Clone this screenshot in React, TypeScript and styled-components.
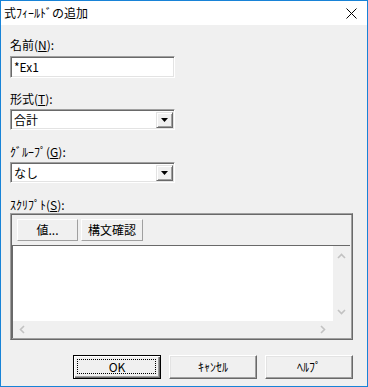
import React from "react";
import styled, { createGlobalStyle } from "styled-components";

const GlobalStyle = createGlobalStyle`
  html, body {
    margin: 0;
    padding: 0;
    background: #f0f0f0;
  }
  * {
    box-sizing: border-box;
  }
`;

const Window = styled.div`
  width: 368px;
  height: 387px;
  border: 1px solid #1883d7;
  display: flex;
  flex-direction: column;
  font-family: "Noto Sans CJK JP", "Liberation Sans", sans-serif;
  font-size: 12px;
  color: #000;
  background: #f0f0f0;
`;

const TitleBar = styled.div`
  height: 24px;
  background: #fff;
  display: flex;
  align-items: center;
  justify-content: space-between;
  padding: 0 10px 0 3px;
  flex-shrink: 0;
`;

const Title = styled.span`
  line-height: 14px;
`;

const Body = styled.div`
  flex: 1;
  display: flex;
  flex-direction: column;
  padding: 13px 14px 7px 9px;
`;

const Label = styled.div<{ $gap: number; $top?: number }>`
  height: 14px;
  line-height: 14px;
  margin-top: ${(p) => p.$top ?? 0}px;
  margin-bottom: ${(p) => p.$gap}px;
`;

const Key = styled.span`
  text-decoration: underline;
`;

const Sunken = styled.div<{ $height: number }>`
  width: 165px;
  height: ${(p) => p.$height}px;
  background: #fff;
  border-style: solid;
  border-width: 1px;
  border-color: #a0a0a0 #fff #fff #a0a0a0;
  box-shadow: inset 1px 1px 0 #696969, inset -1px -1px 0 #e3e3e3;
  display: flex;
  align-items: center;
  padding: 0 1px 0 3px;
  line-height: 14px;
`;

const ComboText = styled.span`
  flex: 1;
`;

const ArrowButton = styled.div`
  width: 17px;
  height: 16px;
  background: #f0f0f0;
  border-style: solid;
  border-width: 1px;
  border-color: #e3e3e3 #696969 #696969 #e3e3e3;
  box-shadow: inset 1px 1px 0 #fff, inset -1px -1px 0 #a0a0a0;
  display: flex;
  align-items: center;
  justify-content: center;
`;

const Group = styled.div`
  height: 127px;
  border-style: solid;
  border-width: 1px;
  border-color: #a0a0a0 #696969 #696969 #a0a0a0;
  box-shadow: inset 1px 1px 0 #696969, inset -1px -1px 0 #a0a0a0;
  padding: 5px 2px 1px 1px;
  display: flex;
  flex-direction: column;
`;

const ToolRow = styled.div`
  display: flex;
  gap: 3px;
  padding-left: 5px;
`;

const ToolButton = styled.div<{ $width: number }>`
  width: ${(p) => p.$width}px;
  height: 22px;
  background: #f0f0f0;
  border-style: solid;
  border-width: 1px;
  border-color: #fff #a0a0a0 #a0a0a0 #fff;
  display: flex;
  align-items: center;
  justify-content: center;
  line-height: 14px;
`;

const Editor = styled.div`
  margin-top: 4px;
  flex: 1;
  border-style: solid;
  border-width: 1px 0 0 1px;
  border-color: #696969;
  display: grid;
  grid-template-columns: 1fr 17px;
  grid-template-rows: 1fr 17px;
  background: #f0f0f0;
`;

const EditArea = styled.div`
  background: #fff;
`;

const ScrollV = styled.div`
  display: flex;
  flex-direction: column;
  justify-content: space-between;
  align-items: center;
  padding: 6px 0 5px;
`;

const ScrollH = styled.div`
  grid-column: 1 / span 2;
  display: flex;
  justify-content: space-between;
  align-items: center;
  padding: 0 23px 0 5px;
`;

const Footer = styled.div`
  margin-top: 15px;
  display: flex;
  justify-content: flex-end;
  gap: 8px;
`;

const DialogButton = styled.div<{ $default?: boolean }>`
  position: relative;
  width: 88px;
  height: 24px;
  background: #f0f0f0;
  border-style: solid;
  border-width: 1px;
  border-color: ${(p) => (p.$default ? "#000" : "#fff #696969 #696969 #fff")};
  box-shadow: ${(p) =>
    p.$default
      ? "inset 1px 1px 0 #fff, inset -1px -1px 0 #696969, inset -2px -2px 0 #a0a0a0"
      : "inset -1px -1px 0 #a0a0a0, inset 1px 1px 0 #e3e3e3"};
  display: flex;
  align-items: center;
  justify-content: center;
  line-height: 14px;
`;

const FocusRing = styled.div`
  position: absolute;
  inset: 3px 4px 4px 3px;
  border: 1px dotted #000;
`;

const Chevron = ({ dir }: { dir: "up" | "down" | "left" | "right" }) => {
  const paths = {
    up: "M1 6 L4.5 2.5 L8 6",
    down: "M1 3 L4.5 6.5 L8 3",
    left: "M6 1 L2.5 4.5 L6 8",
    right: "M3 1 L6.5 4.5 L3 8",
  };
  return (
    <svg width="9" height="9" viewBox="0 0 9 9">
      <path d={paths[dir]} fill="none" stroke="#c2c2c2" strokeWidth="1.6" />
    </svg>
  );
};

const DownTriangle = () => (
  <svg width="7" height="4" viewBox="0 0 7 4">
    <path d="M0 0 H7 L3.5 4 Z" fill="#000" />
  </svg>
);

const CloseIcon = () => (
  <svg width="11" height="11" viewBox="0 0 11 11">
    <path d="M0.5 0.5 L10.5 10.5 M10.5 0.5 L0.5 10.5" stroke="#000" strokeWidth="1" />
  </svg>
);

const App: React.FC = () => {
  return (
    <>
      <GlobalStyle />
      <Window>
        <TitleBar>
          <Title>式ﾌｨｰﾙﾄﾞの追加</Title>
          <CloseIcon />
        </TitleBar>
        <Body>
          <Label $gap={4}>
            名前(<Key>N</Key>):
          </Label>
          <Sunken $height={22}>*Ex1</Sunken>

          <Label $gap={3} $top={14}>
            形式(<Key>T</Key>):
          </Label>
          <Sunken $height={21}>
            <ComboText>合計</ComboText>
            <ArrowButton>
              <DownTriangle />
            </ArrowButton>
          </Sunken>

          <Label $gap={3} $top={15}>
            ｸﾞﾙｰﾌﾟ(<Key>G</Key>):
          </Label>
          <Sunken $height={21}>
            <ComboText>なし</ComboText>
            <ArrowButton>
              <DownTriangle />
            </ArrowButton>
          </Sunken>

          <Label $gap={1} $top={15}>
            ｽｸﾘﾌﾟﾄ(<Key>S</Key>):
          </Label>
          <Group>
            <ToolRow>
              <ToolButton $width={61}>値...</ToolButton>
              <ToolButton $width={62}>構文確認</ToolButton>
            </ToolRow>
            <Editor>
              <EditArea />
              <ScrollV>
                <Chevron dir="up" />
                <Chevron dir="down" />
              </ScrollV>
              <ScrollH>
                <Chevron dir="left" />
                <Chevron dir="right" />
              </ScrollH>
            </Editor>
          </Group>

          <Footer>
            <DialogButton $default>
              OK
              <FocusRing />
            </DialogButton>
            <DialogButton>ｷｬﾝｾﾙ</DialogButton>
            <DialogButton>ﾍﾙﾌﾟ</DialogButton>
          </Footer>
        </Body>
      </Window>
    </>
  );
};

export default App;
